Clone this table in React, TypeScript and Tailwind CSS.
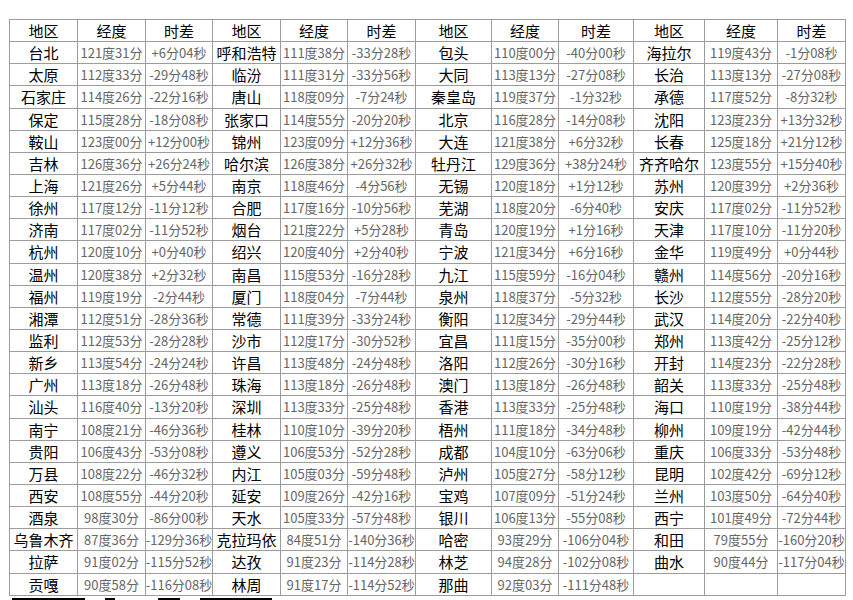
const G1 = `台北 121度31分 +6分04秒
太原 112度33分 -29分48秒
石家庄 114度26分 -22分16秒
保定 115度28分 -18分08秒
鞍山 123度00分 +12分00秒
吉林 126度36分 +26分24秒
上海 121度26分 +5分44秒
徐州 117度12分 -11分12秒
济南 117度02分 -11分52秒
杭州 120度10分 +0分40秒
温州 120度38分 +2分32秒
福州 119度19分 -2分44秒
湘潭 112度51分 -28分36秒
监利 112度53分 -28分28秒
新乡 113度54分 -24分24秒
广州 113度18分 -26分48秒
汕头 116度40分 -13分20秒
南宁 108度21分 -46分36秒
贵阳 106度43分 -53分08秒
万县 108度22分 -46分32秒
西安 108度55分 -44分20秒
酒泉 98度30分 -86分00秒
乌鲁木齐 87度36分 -129分36秒
拉萨 91度02分 -115分52秒
贡嘎 90度58分 -116分08秒`;

const G2 = `呼和浩特 111度38分 -33分28秒
临汾 111度31分 -33分56秒
唐山 118度09分 -7分24秒
张家口 114度55分 -20分20秒
锦州 123度09分 +12分36秒
哈尔滨 126度38分 +26分32秒
南京 118度46分 -4分56秒
合肥 117度16分 -10分56秒
烟台 121度22分 +5分28秒
绍兴 120度40分 +2分40秒
南昌 115度53分 -16分28秒
厦门 118度04分 -7分44秒
常德 111度39分 -33分24秒
沙市 112度17分 -30分52秒
许昌 113度48分 -24分48秒
珠海 113度18分 -26分48秒
深圳 113度33分 -25分48秒
桂林 110度10分 -39分20秒
遵义 106度53分 -52分28秒
内江 105度03分 -59分48秒
延安 109度26分 -42分16秒
天水 105度33分 -57分48秒
克拉玛依 84度51分 -140分36秒
达孜 91度23分 -114分28秒
林周 91度17分 -114分52秒`;

const G3 = `包头 110度00分 -40分00秒
大同 113度13分 -27分08秒
秦皇岛 119度37分 -1分32秒
北京 116度28分 -14分08秒
大连 121度38分 +6分32秒
牡丹江 129度36分 +38分24秒
无锡 120度18分 +1分12秒
芜湖 118度20分 -6分40秒
青岛 120度19分 +1分16秒
宁波 121度34分 +6分16秒
九江 115度59分 -16分04秒
泉州 118度37分 -5分32秒
衡阳 112度34分 -29分44秒
宜昌 111度15分 -35分00秒
洛阳 112度26分 -30分16秒
澳门 113度18分 -26分48秒
香港 113度33分 -25分48秒
梧州 111度18分 -34分48秒
成都 104度10分 -63分06秒
泸州 105度27分 -58分12秒
宝鸡 107度09分 -51分24秒
银川 106度13分 -55分08秒
哈密 93度29分 -106分04秒
林芝 94度28分 -102分08秒
那曲 92度03分 -111分48秒`;

const G4 = `海拉尔 119度43分 -1分08秒
长治 113度13分 -27分08秒
承德 117度52分 -8分32秒
沈阳 123度23分 +13分32秒
长春 125度18分 +21分12秒
齐齐哈尔 123度55分 +15分40秒
苏州 120度39分 +2分36秒
安庆 117度02分 -11分52秒
天津 117度10分 -11分20秒
金华 119度49分 +0分44秒
赣州 114度56分 -20分16秒
长沙 112度55分 -28分20秒
武汉 114度20分 -22分40秒
郑州 113度42分 -25分12秒
开封 114度23分 -22分28秒
韶关 113度33分 -25分48秒
海口 110度19分 -38分44秒
柳州 109度19分 -42分44秒
重庆 106度33分 -53分48秒
昆明 102度42分 -69分12秒
兰州 103度50分 -64分40秒
西宁 101度49分 -72分44秒
和田 79度55分 -160分20秒
曲水 90度44分 -117分04秒
  `;

const groups = [G1, G2, G3, G4].map((g) => g.split("\n").map((l) => {
  const p = l.trim().split(" ");
  return [p[0] ?? "", p[1] ?? "", p[2] ?? ""];
}));

const ROWS = groups[0].map((_, i) => groups.flatMap((g) => g[i] ?? ["", "", ""]));
const HEAD = ["地区", "经度", "时差", "地区", "经度", "时差", "地区", "经度", "时差", "地区", "经度", "时差"];

export default function App() {
  return (
    <div className="w-[853px] h-[600px] overflow-hidden bg-white pt-[19px] pl-[9px]" style={{ fontFamily: '"Noto Sans CJK SC", "Noto Sans", sans-serif' }}>
      <div className="grid w-max gap-px p-px bg-[#9c9c9c] grid-cols-[67px_67px_66px_67px_66px_67px_75px_66px_74px_70px_72px_67px] auto-rows-[21.15px]">
        {HEAD.map((h, i) => (
          <div key={i} className="bg-white flex items-center justify-center text-[15px] text-black leading-none">{h}</div>
        ))}
        {ROWS.map((r, ri) =>
          r.map((c, ci) => (
            <div
              key={`${ri}-${ci}`}
              className={
                ci % 3 === 0
                  ? "bg-white flex items-center justify-center overflow-hidden whitespace-nowrap text-[15px] text-black leading-none"
                  : "bg-white flex items-center justify-center overflow-hidden whitespace-nowrap text-[13px] text-[#666] leading-none"
              }
            >
              {c}
            </div>
          ))
        )}
      </div>
      <div className="flex mt-[2px] h-[3px]">
        <div className="ml-[3px] w-[73px] bg-black" />
        <div className="ml-[20px] w-[10px] bg-black" />
        <div className="ml-[43px] w-[22px] bg-black" />
        <div className="ml-[20px] w-[72px] bg-black" />
      </div>
    </div>
  );
}
